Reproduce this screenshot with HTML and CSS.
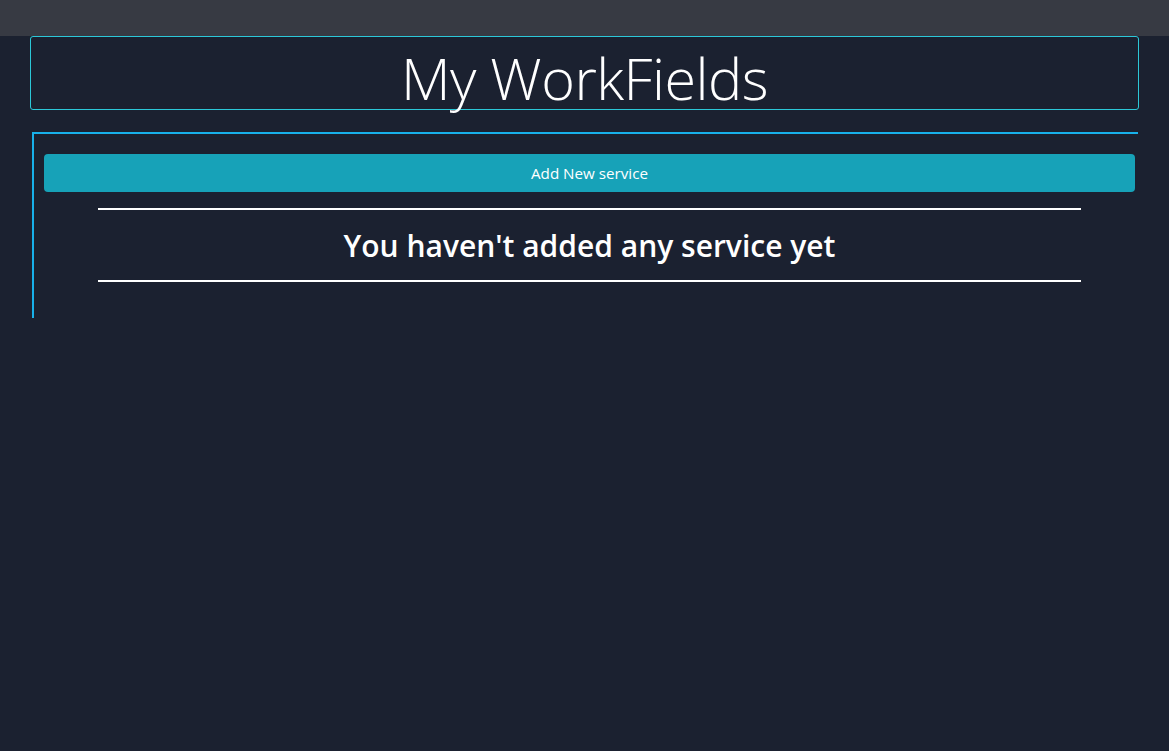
FILE: index.html
```html
<!DOCTYPE html>
<html>
<head>
<meta charset="utf-8">
<title>My WorkFields</title>
<link rel="stylesheet" href="styles.css">
</head>
<body>
<div class="topbar"></div>
<main class="page">
  <header class="title-box">
    <h1 class="title">My WorkFields</h1>
  </header>
  <section class="services">
    <button class="add-btn">Add New service</button>
    <div class="empty">
      <hr class="rule">
      <h2 class="empty-text">You haven't added any service yet</h2>
      <hr class="rule">
    </div>
  </section>
</main>
</body>
</html>
```

FILE: styles.css
```css
html, body {
  margin: 0;
  padding: 0;
  background: #1b2130;
  height: 100%;
}
body {
  font-family: "Open Sans", "Noto Sans", sans-serif;
  color: #ffffff;
}
.topbar {
  height: 36px;
  background: #373a43;
}
.page {
  padding: 0 30px;
}
.title-box {
  border: 1px solid #2cc8d8;
  border-radius: 3px;
  height: 72px;
  display: flex;
  justify-content: center;
  overflow: visible;
}
.title {
  margin: 0;
  font-weight: 300;
  font-size: 57.5px;
  line-height: 82px;
  height: 72px;
  letter-spacing: -0.5px;
  color: #ffffff;
}
.services {
  margin: 22px 1px 0 2px;
  border-top: 2px solid #18b1ea;
  border-left: 2px solid #18b1ea;
  padding: 20px 3px 0 10px;
  height: 164px;
}
.add-btn {
  display: block;
  width: 100%;
  height: 38px;
  border: none;
  border-radius: 4px;
  background: #17a2b8;
  color: #ffffff;
  font-family: "Open Sans", "Noto Sans", sans-serif;
  font-size: 15.2px;
  cursor: pointer;
}
.empty {
  margin: 16px 54px 0;
}
.rule {
  margin: 0;
  border: none;
  height: 2px;
  background: #ffffff;
}
.empty-text {
  margin: 0;
  height: 70px;
  display: flex;
  align-items: center;
  justify-content: center;
  font-size: 30px;
  font-weight: 600;
  letter-spacing: 0;
}
```
